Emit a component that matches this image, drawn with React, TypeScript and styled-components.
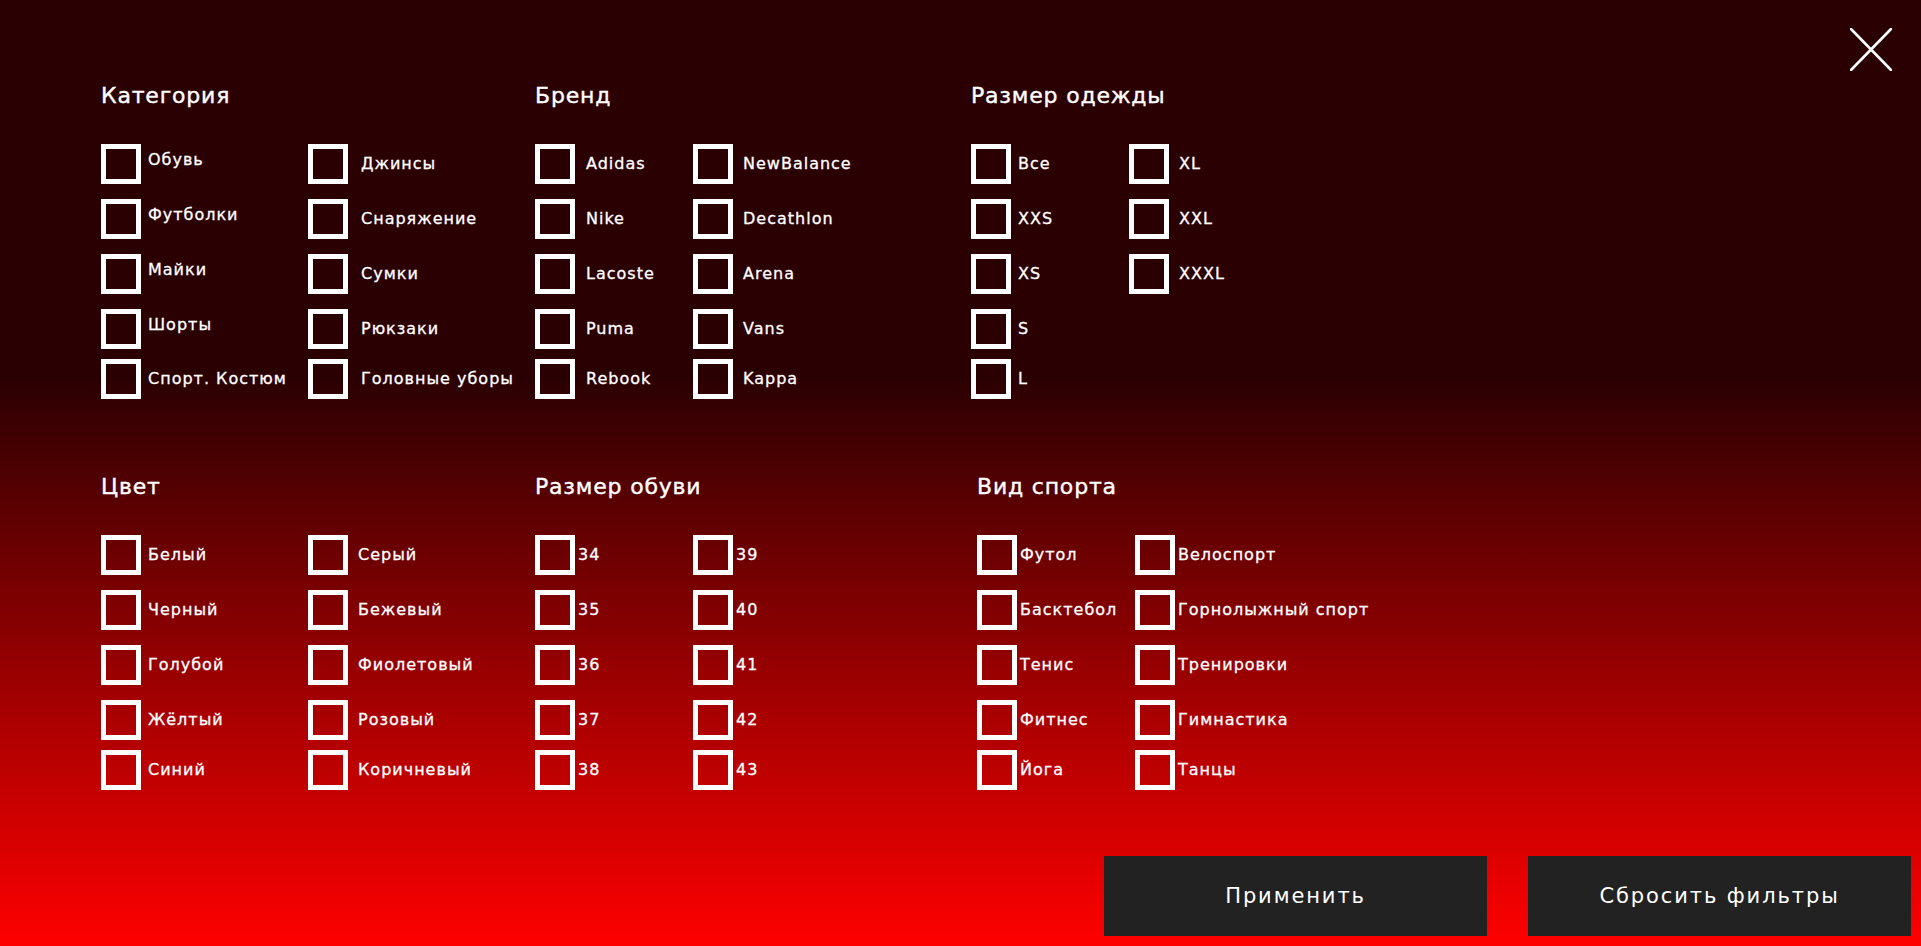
import React from 'react';
import styled, { createGlobalStyle } from 'styled-components';

const GlobalStyle = createGlobalStyle`
    * {
        box-sizing: border-box;
    }
    body {
        margin: 0;
        font-family: 'DejaVu Sans', 'Liberation Sans', sans-serif;
        background: #2b0002;
    }
`;

const Page = styled.div`
    min-height: 100vh;
    display: flex;
    flex-direction: column;
    padding: 28px 10px 10px 101px;
    background: linear-gradient(180deg, #2b0002 0%, #2b0002 40%, #ff0000 100%);
    color: #ffffff;
`;

const Top = styled.div`
    display: flex;
    align-items: flex-start;
`;

const Sections = styled.div`
    flex: 1;
    margin-top: 55px;
    display: grid;
    grid-template-columns: 434px 436px auto;
    row-gap: 75px;
`;

const CloseButton = styled.button`
    width: 42px;
    height: 43px;
    margin-right: 19px;
    padding: 0;
    border: none;
    background: none;
    cursor: pointer;
    display: block;
`;

const Section = styled.section<{ $shift?: number }>`
    margin-left: ${(p) => p.$shift ?? 0}px;
`;

const Heading = styled.h3`
    margin: 0 0 35px;
    font-size: 22px;
    line-height: 26px;
    font-weight: 400;
    letter-spacing: 0.8px;
    color: #ffffff;
    -webkit-text-stroke: 0.4px #ffffff;
`;

const Columns = styled.div<{ $split: number }>`
    display: grid;
    grid-template-columns: ${(p) => p.$split}px auto;
`;

const Column = styled.div<{ $lift: number }>`
    display: flex;
    flex-direction: column;
    gap: 15px;

    & > label:nth-child(5) {
        margin-top: -5px;
    }

    & > label:not(:nth-child(5)) > span:last-child {
        margin-bottom: ${(p) => p.$lift * 2}px;
    }
`;

const Option = styled.label<{ $gap: number }>`
    display: flex;
    align-items: center;
    gap: ${(p) => p.$gap}px;
    cursor: pointer;
`;

const HiddenInput = styled.input`
    position: absolute;
    opacity: 0;
    width: 0;
    height: 0;
`;

const Box = styled.span`
    flex: none;
    width: 40px;
    height: 40px;
    border: 5px solid #ffffff;
`;

const OptionText = styled.span`
    font-size: 16px;
    line-height: 20px;
    letter-spacing: 1px;
    color: #ffffff;
    white-space: nowrap;
    -webkit-text-stroke: 0.3px #ffffff;
`;

const Footer = styled.div`
    margin-top: auto;
    display: flex;
    justify-content: flex-end;
    gap: 41px;
`;

const ActionButton = styled.button`
    width: 383px;
    height: 80px;
    border: none;
    background: #222222;
    color: #ffffff;
    font-family: 'DejaVu Sans', 'Liberation Sans', sans-serif;
    font-size: 21px;
    letter-spacing: 1.9px;
    cursor: pointer;
`;

interface FilterGroup {
    title: string;
    split: number;
    gaps: [number, number];
    lift?: number;
    shift?: number;
    columns: [string[], string[]];
}

const groups: FilterGroup[] = [
    {
        title: 'Категория',
        split: 207,
        gaps: [7, 13],
        lift: 4,
        columns: [
            ['Обувь', 'Футболки', 'Майки', 'Шорты', 'Спорт. Костюм'],
            ['Джинсы', 'Снаряжение', 'Сумки', 'Рюкзаки', 'Головные уборы'],
        ],
    },
    {
        title: 'Бренд',
        split: 158,
        gaps: [11, 10],
        columns: [
            ['Adidas', 'Nike', 'Lacoste', 'Puma', 'Rebook'],
            ['NewBalance', 'Decathlon', 'Arena', 'Vans', 'Kappa'],
        ],
    },
    {
        title: 'Размер одежды',
        split: 158,
        gaps: [7, 10],
        columns: [
            ['Все', 'XXS', 'XS', 'S', 'L'],
            ['XL', 'XXL', 'XXXL'],
        ],
    },
    {
        title: 'Цвет',
        split: 207,
        gaps: [7, 10],
        columns: [
            ['Белый', 'Черный', 'Голубой', 'Жёлтый', 'Синий'],
            ['Серый', 'Бежевый', 'Фиолетовый', 'Розовый', 'Коричневый'],
        ],
    },
    {
        title: 'Размер обуви',
        split: 158,
        gaps: [3, 3],
        columns: [
            ['34', '35', '36', '37', '38'],
            ['39', '40', '41', '42', '43'],
        ],
    },
    {
        title: 'Вид спорта',
        split: 158,
        gaps: [3, 3],
        shift: 6,
        columns: [
            ['Футол', 'Басктебол', 'Тенис', 'Фитнес', 'Йога'],
            ['Велоспорт', 'Горнолыжный спорт', 'Тренировки', 'Гимнастика', 'Танцы'],
        ],
    },
];

function CloseIcon() {
    return (
        <svg width="42" height="43" viewBox="0 0 42 43" fill="none">
            <path d="M1 1L41 42M41 1L1 42" stroke="#ffffff" strokeWidth="2.6" strokeLinecap="round" />
        </svg>
    );
}

function FilterSection({ title, split, gaps, lift, shift, columns }: FilterGroup) {
    return (
        <Section $shift={shift}>
            <Heading>{title}</Heading>
            <Columns $split={split}>
                {columns.map((items, c) => (
                    <Column key={c} $lift={c === 0 ? lift ?? 0 : 0}>
                        {items.map((item) => (
                            <Option key={item} $gap={gaps[c]}>
                                <HiddenInput type="checkbox" />
                                <Box />
                                <OptionText>{item}</OptionText>
                            </Option>
                        ))}
                    </Column>
                ))}
            </Columns>
        </Section>
    );
}

export default function App() {
    return (
        <>
            <GlobalStyle />
            <Page>
                <Top>
                    <Sections>
                        {groups.map((g) => (
                            <FilterSection key={g.title} {...g} />
                        ))}
                    </Sections>
                    <CloseButton aria-label="Закрыть">
                        <CloseIcon />
                    </CloseButton>
                </Top>
                <Footer>
                    <ActionButton>Применить</ActionButton>
                    <ActionButton>Сбросить фильтры</ActionButton>
                </Footer>
            </Page>
        </>
    );
}
